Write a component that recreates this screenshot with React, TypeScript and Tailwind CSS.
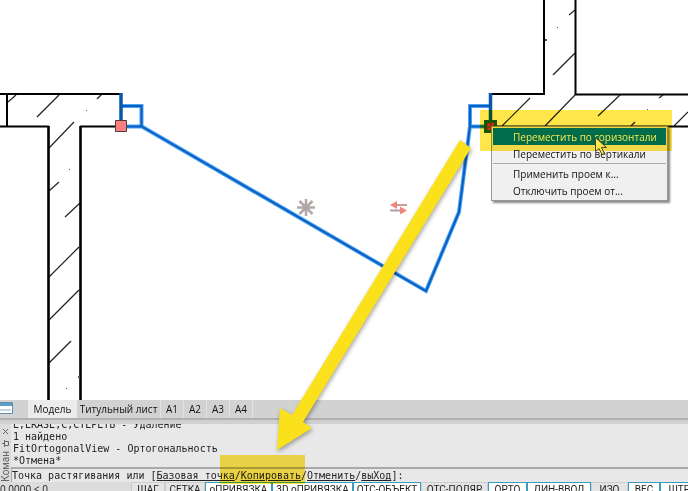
import type { ReactNode } from 'react';

const hatchLines = [
  'M8 102l8-7', 'M37 117l22-22', 'M97 99l5-5', 'M49 148l25-26', 'M49 191l10-9', 'M65 217l15-14',
  'M49 277l30-30', 'M49 320l30-30', 'M49 363l22-22', 'M569 15l6-5', 'M553 75l22-22',
  'M502 126l28-28', 'M545 126l30-31', 'M598 116l22-21', 'M659 98l4-3', 'M631 126l4-4', 'M674 126l14-14',
];

const sheets = ['A1', 'A2', 'A3', 'A4'];

const modes = [
  { label: 'ШАГ', active: false, width: 'w-[34px]' },
  { label: 'СЕТКА', active: false, width: 'w-[40px]' },
  { label: 'оПРИВЯЗКА', active: true, width: 'w-[67px]' },
  { label: '3D оПРИВЯЗКА', active: true, width: 'w-[81px]' },
  { label: 'ОТС-ОБЪЕКТ', active: true, width: 'w-[68px]' },
  { label: 'ОТС-ПОЛЯР', active: false, width: 'w-[67px]' },
  { label: 'ОРТО', active: true, width: 'w-[39px]' },
  { label: 'ДИН-ВВОД', active: true, width: 'w-[64px]' },
  { label: 'ИЗО', active: false, width: 'w-[37px]' },
  { label: 'ВЕС', active: true, width: 'w-[32px]' },
  { label: 'ШТРИХ', active: true, width: 'w-[52px]' },
];

function Drawing() {
  return (
    <svg className="block h-full w-full" aria-label="План">
      <g stroke="#222" strokeWidth="1.2" fill="none">
        {hatchLines.map((d) => (
          <path key={d} d={d} />
        ))}
      </g>
      <g stroke="#000" strokeWidth="2" fill="none">
        <path d="M0 94h121M0 126.500h49M80 126.500h41M7 94v32" />
        <path d="M490 94h54V0M575.500 0v94.500H688M490 126.500h198" />
      </g>
      <path d="M48.500 126v274M80.500 126v274" stroke="#000" strokeWidth="2.600" />
      <path
        d="M86 110h1v1h-1zM69 169h1v1h-1zM66 388h1v1h-1zM78 376h2v2h-2zM545 39h2v2h-2zM557 27h1v1h-1zM647 109h1v1h-1z"
        fill="#555"
      />
      <g fill="none">
        <g stroke="#4aa3f5" strokeWidth="4">
          <path d="M121 106h20.500v20.500H121M141 126l285 165 33-79 11-86M490 106h-20v20.500h20" />
        </g>
        <g stroke="#0a5fc0" strokeWidth="2">
          <path d="M121 106h20.500v20.500H121M141 126l285 165 33-79 11-86M490 106h-20v20.500h20" />
        </g>
        <path d="M121 93v33M490.500 93v33" stroke="#0a56a8" strokeWidth="3.500" />
      </g>
      <path d="M115.500 120.500h11v11h-11z" fill="#fa7f7f" stroke="#5a3838" />
      <path d="M485.500 121.500h10v10h-10z" fill="#8a3a1e" stroke="#175c1c" strokeWidth="3" />
      <path d="M488 124h2v2h-2zM491 126h2v2h-2zM488 128h2v2h-2zM492 123h2v2h-2z" fill="#f02818" />
      <path
        d="M306 199v17M297 207.500h18M299.500 201l13 13M312.500 201l-13 13"
        stroke="#b3a6a6"
        strokeWidth="2.500"
      />
      <g fill="none" strokeWidth="2">
        <path d="M393 205h14" stroke="#cf9c9c" />
        <path d="M390 210.500h14" stroke="#b69c9c" />
      </g>
      <path d="M390 205l7-4v8zM407 210.500l-7-4v8z" fill="#f08480" />
    </svg>
  );
}

function MenuItem({ children, selected = false }: { children: ReactNode; selected?: boolean }) {
  return (
    <button
      type="button"
      role="menuitem"
      className={`block h-[17px] w-full pl-5 text-left text-[10px] leading-4 whitespace-nowrap ${
        selected ? 'bg-[#0078ff] text-white' : 'text-[#111]'
      }`}
    >
      {children}
    </button>
  );
}

function ContextMenu() {
  return (
    <div
      role="menu"
      className="absolute top-[126px] left-[491px] w-[177px] border border-[#999] bg-[#f0f0f0] p-px shadow-[2px_2px_2px_#888]"
    >
      <MenuItem selected>Переместить по горизонтали</MenuItem>
      <MenuItem>Переместить по вертикали</MenuItem>
      <hr className="my-px border-[#aaa]" />
      <MenuItem>Применить проем к...</MenuItem>
      <MenuItem>Отключить проем от...</MenuItem>
    </div>
  );
}

function SheetTabs() {
  return (
    <nav className="flex h-5 items-stretch border-b-2 border-[#b0b0b0] bg-[#d2d2d2] text-[10px] leading-4 text-[#111]">
      <div className="w-7 pt-[2px]">
        <svg width="14" height="13" aria-hidden="true">
          <path d="M0 .5h12.500v11H0" fill="#fff" stroke="#5d8fad" />
          <path d="M0 1h12v3H0z" fill="#5a9fc8" />
          <path d="M0 8h11" stroke="#8aa9bb" />
        </svg>
      </div>
      <button type="button" className="w-[49px] bg-[#ececec]">Модель</button>
      <button type="button" className="w-[84px] border-r border-[#e2e2e2] whitespace-nowrap">
        Титульный лист
      </button>
      {sheets.map((sheet) => (
        <button key={sheet} type="button" className="w-[23px] border-r border-[#e2e2e2]">
          {sheet}
        </button>
      ))}
    </nav>
  );
}

function CommandPanel() {
  return (
    <section className="flex border-t-4 border-[#d0d0d0] bg-[#e8e8e8] font-['DejaVu_Sans_Mono',monospace] text-[10px] text-[#222]">
      <div className="flex w-[11px] flex-col items-center justify-between bg-[#dcdcdc] pt-1 text-[#666]">
        <button type="button" aria-label="Закрыть">
          <svg width="7" height="7" stroke="currentColor" aria-hidden="true">
            <path d="M1 1l5 5M6 1L1 6" />
          </svg>
        </button>
        <svg width="7" height="7" fill="none" stroke="currentColor" aria-hidden="true">
          <path d="M2.500 1.500h4v4h-4zM2.500 0v7M0 3.500h2" />
        </svg>
        <span className="rotate-180 font-['Roboto',sans-serif] text-[10px] leading-3 [writing-mode:vertical-rl]">
          Коман
        </span>
      </div>
      <div className="min-w-0 flex-1">
        <div className="flex h-[43px] flex-col justify-end overflow-hidden pl-[2px] leading-3 whitespace-nowrap">
          <p>E,ERASE,С,СТЕРЕТЬ - Удаление</p>
          <p>1 найдено</p>
          <p>FitOrtogonalView - Ортогональность</p>
          <p>*Отмена*</p>
        </div>
        <p className="h-[15px] border-t-2 border-l border-[#aaa] leading-[14px] whitespace-nowrap">
          Точка растягивания или [<u>Базовая точка</u>/<u>Копировать</u>/<u>Отменить</u>/<u>выХод</u>]:
        </p>
      </div>
    </section>
  );
}

function StatusBar() {
  return (
    <footer className="flex h-[9px] items-start overflow-hidden bg-[#dcdcdc] text-[10px] leading-[14px] text-[#222]">
      <span className="w-[131px] shrink-0">0.0000 &lt; 0</span>
      {modes.map(({ label, active, width }) => (
        <button
          key={label}
          type="button"
          className={`h-4 shrink-0 border font-['Roboto',sans-serif] whitespace-nowrap ${width} ${
            active ? 'border-[#3a9cc4] bg-white' : 'border-[#ccc] bg-[#e4e4e4]'
          }`}
        >
          {label}
        </button>
      ))}
    </footer>
  );
}

function Annotations() {
  return (
    <>
      <div className="pointer-events-none absolute top-[110px] left-[480px] h-[41px] w-[192px] bg-[#ffe64a] mix-blend-multiply" />
      <div className="pointer-events-none absolute top-[455px] left-[220px] h-[29px] w-[85px] bg-[#ffe64a] mix-blend-multiply" />
      <svg className="pointer-events-none absolute inset-0 h-full w-full" aria-hidden="true">
        <path
          d="M460 140L471 148 303 422 312 428 277 450 280 408 292 415z"
          fill="#fbe01c"
          className="drop-shadow-[1px_2px_2px_rgba(0,0,0,0.35)]"
        />
        <path d="M595.500 137.500v14l3.500-3 3 6 2.500-1-3-6h5z" fill="#ffe64a" stroke="#4a4420" />
      </svg>
    </>
  );
}

export default function App() {
  return (
    <div className="relative isolate flex h-screen flex-col overflow-hidden bg-white font-['Open_Sans',sans-serif]">
      <main className="relative min-h-0 flex-1">
        <Drawing />
        <ContextMenu />
      </main>
      <SheetTabs />
      <CommandPanel />
      <StatusBar />
      <Annotations />
    </div>
  );
}
